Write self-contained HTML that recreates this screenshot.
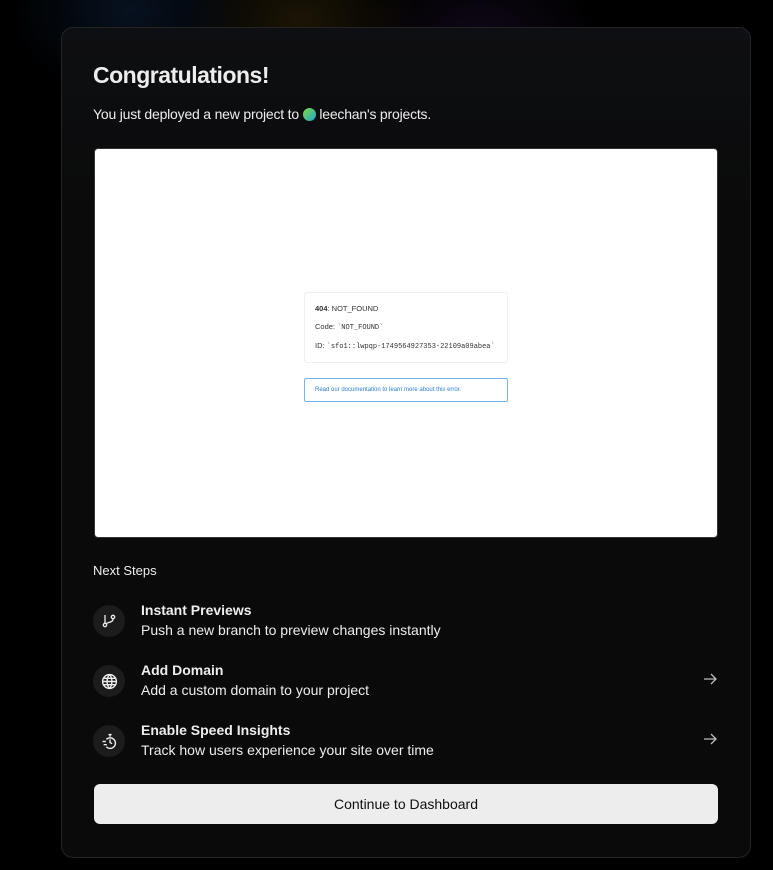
<!DOCTYPE html>
<html><head><style>
*{box-sizing:border-box;margin:0;padding:0}
body{width:773px;height:870px;overflow:hidden;background:#000;font-family:"Liberation Sans",sans-serif;position:relative}
.glow{position:absolute;left:0;top:0;width:773px;height:300px;background:
radial-gradient(ellipse 120px 90px at 130px 10px,rgba(20,50,90,.35),transparent),
radial-gradient(ellipse 120px 90px at 300px 20px,rgba(90,70,20,.3),transparent),
radial-gradient(ellipse 120px 90px at 480px 40px,rgba(60,30,90,.25),transparent)}
.card{position:absolute;left:61px;top:27px;width:690px;height:831px;border:1px solid #242424;border-radius:12px;background:linear-gradient(180deg,#0e0f12 0,#0a0a0a 200px)}
h1{position:absolute;left:31px;top:34px;color:#ededed;font-size:23px;font-weight:bold;letter-spacing:-.5px}
.sub{position:absolute;left:31px;top:78px;color:#ededed;font-size:14px;letter-spacing:-.2px}
.dot{display:inline-block;width:13px;height:13px;border-radius:50%;background:linear-gradient(135deg,#7ddc3c,#1fa3d8);vertical-align:-2px}
.prev{position:absolute;left:32px;top:120px;width:624px;height:390px;background:#fff;border:1px solid #333;border-radius:4px}
.box{position:absolute;left:209px;top:143px;width:204px;height:71px;border:1px solid #eee;border-radius:3px;font-size:7.5px;color:#333;padding:11px 10px}
.box div{margin-bottom:9px}
.mono{font-family:"Liberation Mono",monospace;font-size:7px}
.link{position:absolute;left:209px;top:229px;width:204px;height:24px;border:1px solid #7ab3ec;border-radius:2px;font-size:6px;color:#2c7fd6;padding:8px 10px}
.ns{position:absolute;left:31px;top:535px;color:#ededed;font-size:13px}
.step{position:absolute;left:31px;width:625px;height:44px}
.ic{position:absolute;left:0;top:4px;width:32px;height:32px;border-radius:50%;background:#1c1c1c;display:flex;align-items:center;justify-content:center}
.t{position:absolute;left:48px;top:1px;color:#ededed;font-size:14px;font-weight:bold}
.d{position:absolute;left:48px;top:21px;color:#ededed;font-size:14px}
.arr{position:absolute;right:0;top:10px}
.btn{position:absolute;left:32px;top:756px;width:624px;height:40px;background:#ededed;border-radius:6px;color:#111;font-size:14px;text-align:center;line-height:40px}
</style></head><body>
<div class="glow"></div>
<div class="card">
<h1>Congratulations!</h1>
<div class="sub">You just deployed a new project to <span class="dot"></span> leechan's projects.</div>
<div class="prev">
<div class="box"><div><b>404</b>: NOT_FOUND</div><div>Code: <span class="mono">`NOT_FOUND`</span></div><div>ID: <span class="mono">`sfo1::lwpqp-1749564927353-22109a09abea`</span></div></div>
<div class="link">Read our documentation to learn more about this error.</div>
</div>
<div class="ns">Next Steps</div>
<div class="step" style="top:573px"><div class="ic"><svg width="16" height="16" viewBox="0 0 16 16" fill="none" stroke="#ededed" stroke-width="1.3"><circle cx="4" cy="12" r="1.7"/><circle cx="12" cy="4" r="1.7"/><path d="M4 2v8M12 6c0 4-6 3-7 5"/></svg></div><div class="t">Instant Previews</div><div class="d">Push a new branch to preview changes instantly</div></div>
<div class="step" style="top:633px"><div class="ic"><svg width="17" height="17" viewBox="0 0 16 16" fill="none" stroke="#ededed" stroke-width="1.3"><circle cx="8" cy="8" r="6.5"/><path d="M1.5 8h13M8 1.5c-3 3-3 10 0 13M8 1.5c3 3 3 10 0 13M2.5 5h11M2.5 11h11"/></svg></div><div class="t">Add Domain</div><div class="d">Add a custom domain to your project</div><svg class="arr" width="16" height="16" viewBox="0 0 16 16" fill="none" stroke="#bbb" stroke-width="1.3"><path d="M2 8h12M9 3l5 5-5 5"/></svg></div>
<div class="step" style="top:693px"><div class="ic"><svg width="17" height="17" viewBox="0 0 16 16" fill="none" stroke="#ededed" stroke-width="1.3"><path d="M7 1.5h3M8.5 1.5v2M5 6a5 5 0 1 1 0 7M1.5 8h3M2.5 11h3M8.5 6v3l2 1"/></svg></div><div class="t">Enable Speed Insights</div><div class="d">Track how users experience your site over time</div><svg class="arr" width="16" height="16" viewBox="0 0 16 16" fill="none" stroke="#bbb" stroke-width="1.3"><path d="M2 8h12M9 3l5 5-5 5"/></svg></div>
<div class="btn">Continue to Dashboard</div>
</div>
</body></html>
